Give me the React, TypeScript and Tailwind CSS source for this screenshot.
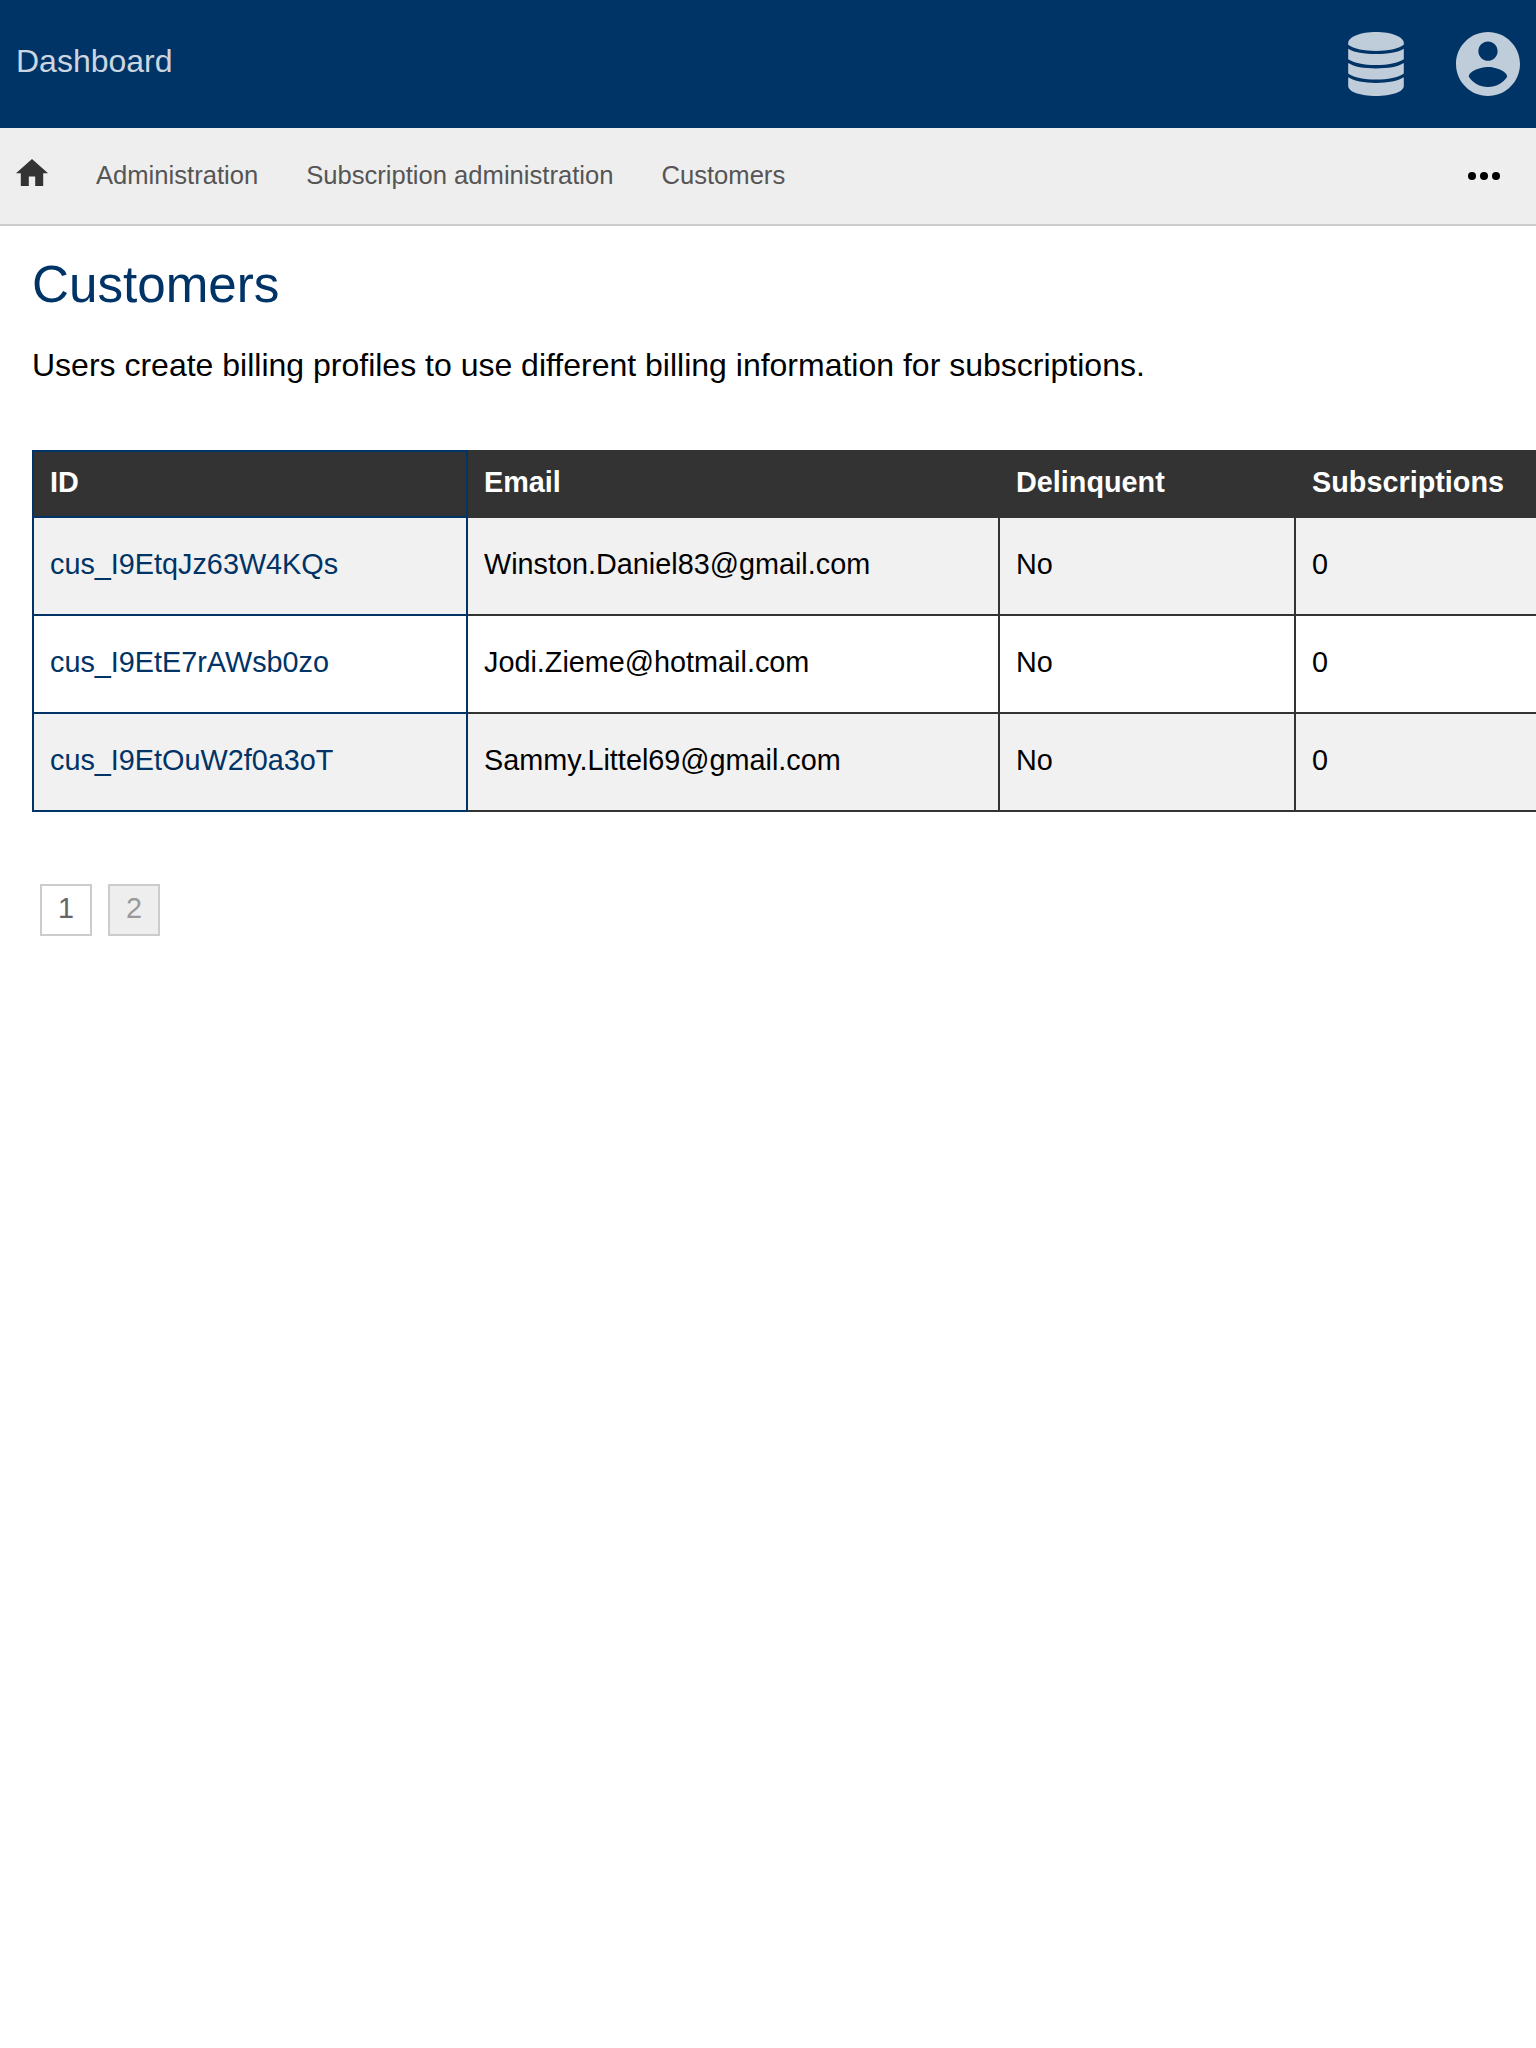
import React from "react";

const customers = [
  { id: "cus_I9EtqJz63W4KQs", email: "Winston.Daniel83@gmail.com", delinquent: "No", subscriptions: 0 },
  { id: "cus_I9EtE7rAWsb0zo", email: "Jodi.Zieme@hotmail.com", delinquent: "No", subscriptions: 0 },
  { id: "cus_I9EtOuW2f0a3oT", email: "Sammy.Littel69@gmail.com", delinquent: "No", subscriptions: 0 },
];

function DatabaseIcon() {
  return (
    <svg className="block h-16 w-14" viewBox="0 0 56 64" fill="currentColor">
      <path d="M0.200 11C0.200 4.900 12.600 0 28 0s27.800 4.900 27.800 11v1.800C50 17 40 19 28 19S6 17 0.200 12.800z" />
      <path d="M0.200 16.800C6 20.500 16 22 28 22s22-1.500 27.800-5.200v10.400C50 31 40 33 28 33S6 31 0.200 27.200z" />
      <path d="M0.200 31C6 34.900 16 36.400 28 36.400S50 34.900 55.800 31v10.400C50 45.400 40 47.400 28 47.400S6 45.400 0.200 41.400z" />
      <path d="M0.200 45.300C6 49.200 16 50.900 28 50.900s22-1.700 27.800-5.600V54c0 5.800-12.400 10-27.800 10S0.200 59.800 0.200 54z" />
    </svg>
  );
}

function AccountIcon() {
  return (
    <svg className="block size-16" viewBox="2 2 20 20" fill="currentColor">
      <path d="M12 2C6.480 2 2 6.480 2 12s4.480 10 10 10 10-4.480 10-10S17.520 2 12 2zm0 3c1.660 0 3 1.340 3 3s-1.340 3-3 3-3-1.340-3-3 1.340-3 3-3zm0 14.200c-2.500 0-4.710-1.280-6-3.220.030-1.990 4-3.080 6-3.080 1.990 0 5.970 1.090 6 3.080-1.290 1.940-3.500 3.220-6 3.220z" />
    </svg>
  );
}

function Header() {
  return (
    <header className="flex h-32 items-center justify-between bg-[#003366] px-4">
      <a className="pb-1.5 text-[32px] leading-9 text-[#ccd6e0]">Dashboard</a>
      <div className="flex gap-[52px] text-[#bfccd9]">
        <DatabaseIcon />
        <AccountIcon />
      </div>
    </header>
  );
}

function Breadcrumbs() {
  return (
    <nav className="flex h-[98px] items-center gap-12 border-b-2 border-[#cccccc] bg-[#eeeeee] pr-9 pl-4 text-[25.6px] text-[#555555]">
      <svg className="-mt-2 h-[27px] w-8 text-[#333333]" viewBox="2 3 20 17" preserveAspectRatio="none" fill="currentColor">
        <path d="M10 20v-6h4v6h5v-8h3L12 3 2 12h3v8z" />
      </svg>
      <a className="pb-0.5">Administration</a>
      <a className="pb-0.5">Subscription administration</a>
      <a className="pb-0.5">Customers</a>
      <svg className="ml-auto h-2 w-8 text-black" viewBox="0 0 32 8" fill="currentColor">
        <circle cx="4" cy="4" r="4" />
        <circle cx="16" cy="4" r="4" />
        <circle cx="28" cy="4" r="4" />
      </svg>
    </nav>
  );
}

function CustomerTable() {
  return (
    <div className="mt-[63px] overflow-hidden">
      <table className="w-[1642px] table-fixed border-collapse text-left text-[28.8px] leading-8">
        <colgroup>
          <col className="w-[434px]" />
          <col className="w-[532px]" />
          <col className="w-[296px]" />
          <col className="w-[380px]" />
        </colgroup>
        <thead>
          <tr className="h-[66px] bg-[#333333] text-white">
            <th className="border-2 border-[#003366] px-4 pb-1 font-bold">ID</th>
            <th className="border-2 border-[#333333] px-4 pb-1 font-bold">Email</th>
            <th className="border-2 border-[#333333] px-4 pb-1 font-bold">Delinquent</th>
            <th className="border-2 border-[#333333] px-4 pb-1 font-bold">Subscriptions</th>
          </tr>
        </thead>
        <tbody>
          {customers.map((c) => (
            <tr key={c.id} className="h-[98px] odd:bg-[#f1f1f1]">
              <td className="border-2 border-[#003366] px-4 pb-1 text-[#003366]">{c.id}</td>
              <td className="border-2 border-[#333333] px-4 pb-1">{c.email}</td>
              <td className="border-2 border-[#333333] px-4 pb-1">{c.delinquent}</td>
              <td className="border-2 border-[#333333] px-4 pb-1">{c.subscriptions}</td>
            </tr>
          ))}
        </tbody>
      </table>
    </div>
  );
}

function Pagination() {
  return (
    <div className="mt-[72px] flex gap-4 pl-2 text-[28.8px] leading-none">
      <a className="flex size-[52px] items-center justify-center border-2 border-[#cccccc] pb-1 text-[#666666]">1</a>
      <a className="flex size-[52px] items-center justify-center border-2 border-[#cccccc] bg-[#eeeeee] pb-1 text-[#999999]">2</a>
    </div>
  );
}

export default function App() {
  return (
    <div className="min-h-screen overflow-hidden bg-white font-['Liberation_Sans',Arial,sans-serif] text-black">
      <Header />
      <Breadcrumbs />
      <main className="pl-8">
        <h1 className="pt-[29px] text-[51.2px] leading-[60px] text-[#003366]">Customers</h1>
        <p className="mt-7 text-[32px] leading-[44px]">
          Users create billing profiles to use different billing information for subscriptions.
        </p>
        <CustomerTable />
        <Pagination />
      </main>
    </div>
  );
}
